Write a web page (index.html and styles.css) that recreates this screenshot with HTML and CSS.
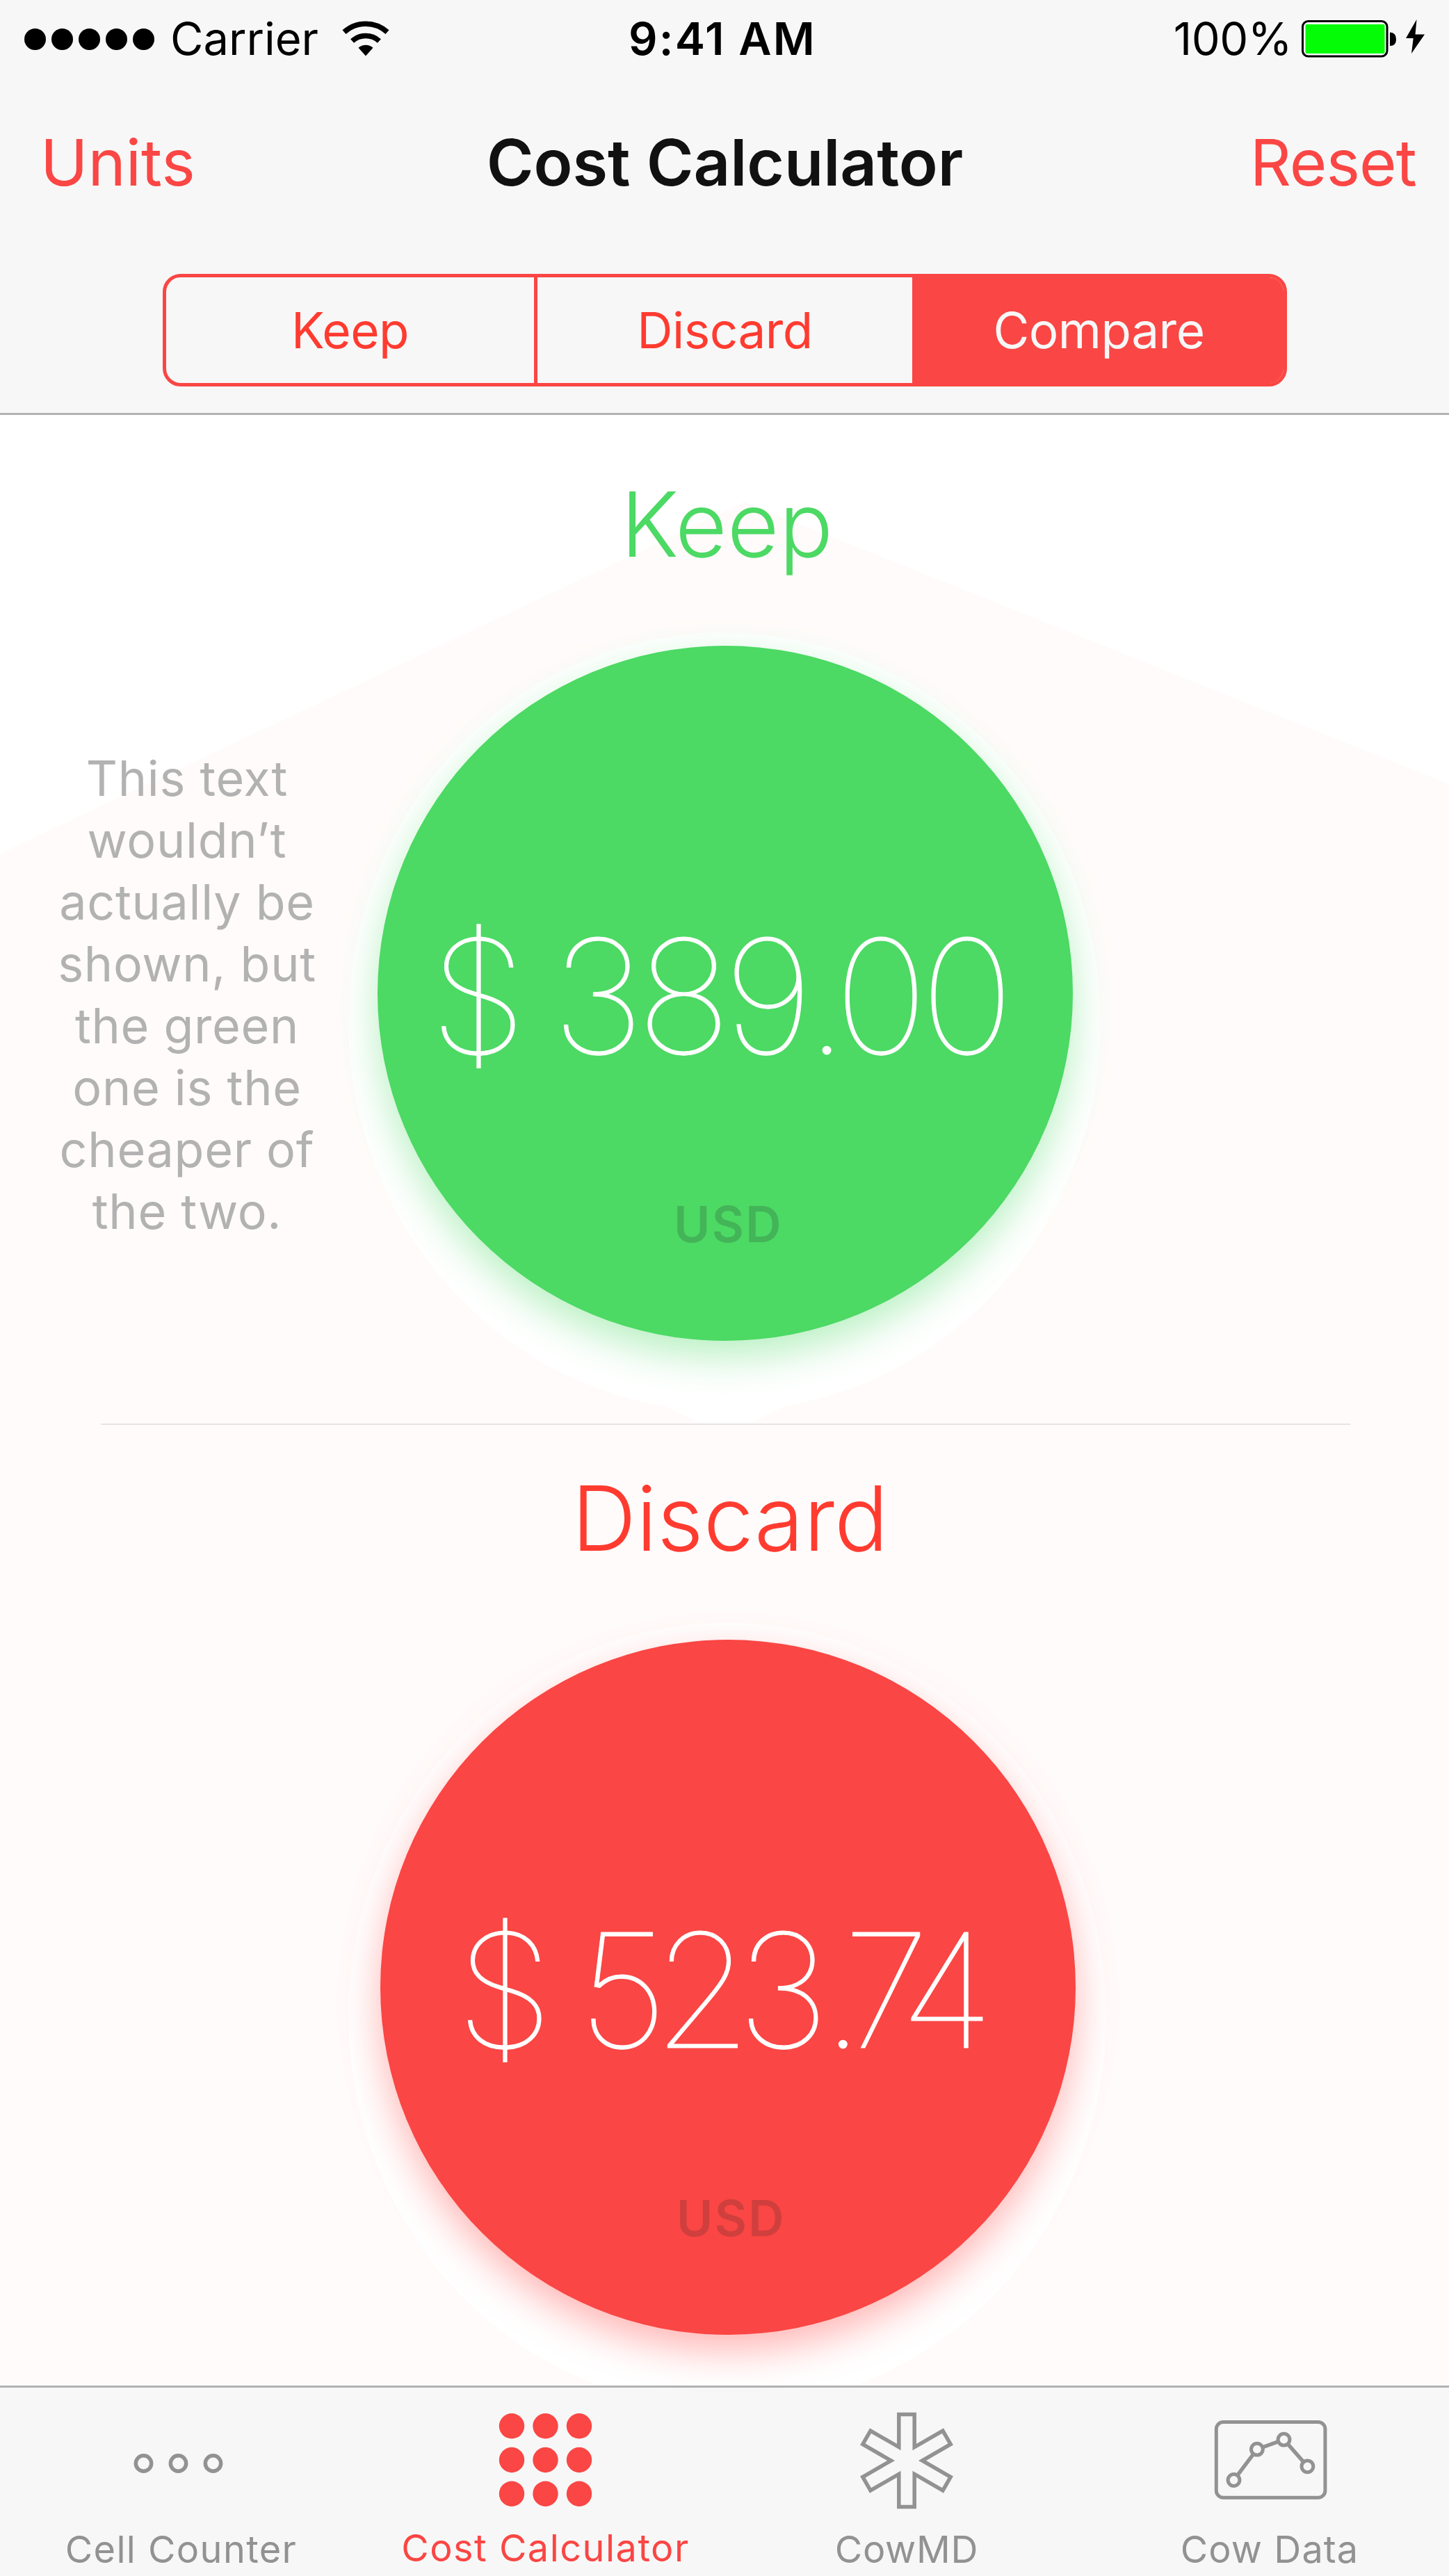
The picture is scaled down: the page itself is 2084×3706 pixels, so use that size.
FILE: index.html
```html
<!DOCTYPE html>
<html lang="en">
<head>
<meta charset="utf-8">
<title>Cost Calculator</title>
<link rel="stylesheet" href="styles.css">
</head>
<body>
<div class="app">
  <header class="header">
    <div class="status">
      <div class="status-left">
        <div class="signal"><i></i><i></i><i></i><i></i><i></i></div>
        <span class="carrier">Carrier</span>
        <svg class="wifi" width="70" height="52" viewBox="0 0 70 52">
          <g fill="none" stroke="#000" stroke-width="7.5">
            <path d="M4 16.1A46.3 46.3 0 0 1 66 16.1"/>
            <path d="M15.6 29A29 29 0 0 1 54.4 29"/>
          </g>
          <path d="M35 50.5L24.5 38.8A15.7 15.7 0 0 1 45.5 38.8Z"/>
        </svg>
      </div>
      <span class="clock">9:41 AM</span>
      <div class="status-right">
        <span class="percent">100%</span>
        <svg class="battery" width="136" height="54" viewBox="0 0 136 54">
          <rect x="1.5" y="1.5" width="121.5" height="50.5" rx="8" fill="#fff" stroke="#000" stroke-width="3"/>
          <rect x="5.5" y="6" width="114" height="42" rx="2" fill="#04fd06"/>
          <path d="M127 17.5Q136 18 136 27.5T127 37Z"/>
        </svg>
        <svg class="bolt" width="27" height="50" viewBox="0 0 27 50">
          <path d="M15.5 0L13.5 21.5H27L8 49L10.7 27H0Z"/>
        </svg>
      </div>
    </div>
    <nav class="nav">
      <a class="nav-link">Units</a>
      <h1 class="nav-title">Cost Calculator</h1>
      <a class="nav-link nav-end">Reset</a>
    </nav>
    <div class="segments">
      <button class="segment segment-first">Keep</button>
      <button class="segment">Discard</button>
      <button class="segment segment-on">Compare</button>
    </div>
  </header>

  <main class="content">
    <svg class="backdrop" width="2084" height="2835" viewBox="0 597 2084 2835">
      <path fill="#fffbfa" d="M0 1228L1071 722L2084 1128V3432H0Z"/>
      <ellipse cx="1042" cy="1470" rx="541" ry="560" fill="#fff"/>
      <path fill="#fff" d="M745 1922L1005 2046H1080L1340 1922Z"/>
      <ellipse cx="1046" cy="2900" rx="545" ry="565" fill="#fff"/>
    </svg>
    <section class="result">
      <h2 class="result-title keep-title">Keep</h2>
      <div class="result-row">
        <p class="note">This text<br>wouldn’t<br>actually be<br>shown, but<br>the green<br>one is the<br>cheaper of<br>the two.</p>
        <div class="disc disc-keep">
          <div class="amount amount-keep">$ 389<span class="dot">.</span>00</div>
          <div class="currency">USD</div>
        </div>
      </div>
    </section>
    <hr class="divider">
    <section class="result">
      <h2 class="result-title discard-title">Discard</h2>
      <div class="result-row">
        <div></div>
        <div class="disc disc-discard">
          <div class="amount amount-discard">$ <span class="tight">52</span>3<span class="dot">.</span><span class="seven">7</span>4</div>
          <div class="currency">USD</div>
        </div>
      </div>
    </section>
  </main>

  <footer class="tabs">
    <div class="tab tab-cell">
      <svg width="170" height="140" viewBox="0 0 170 140" fill="none" stroke="#929292" stroke-width="5.5">
        <circle cx="30.5" cy="74" r="11.2"/><circle cx="80.5" cy="74" r="11.2"/><circle cx="130.5" cy="74" r="11.2"/>
      </svg>
      <span>Cell Counter</span>
    </div>
    <div class="tab tab-cost">
      <svg width="170" height="140" viewBox="0 0 170 140" fill="#fa4644">
        <circle cx="36" cy="20.3" r="18.2"/><circle cx="84.5" cy="20.3" r="18.2"/><circle cx="133" cy="20.3" r="18.2"/>
        <circle cx="36" cy="69" r="18.2"/><circle cx="84.5" cy="69" r="18.2"/><circle cx="133" cy="69" r="18.2"/>
        <circle cx="36" cy="117.7" r="18.2"/><circle cx="84.5" cy="117.7" r="18.2"/><circle cx="133" cy="117.7" r="18.2"/>
      </svg>
      <span>Cost Calculator</span>
    </div>
    <div class="tab tab-md">
      <svg width="170" height="140" viewBox="-85 -70 170 140" fill="none" stroke="#929292" stroke-width="5.5">
        <path d="M-11.2 -66.5H11.2V-19.4L52 -42.95L63.2 -23.55L22.4 0L63.2 23.55L52 42.95L11.2 19.4V66.5H-11.2V19.4L-52 42.95L-63.2 23.55L-22.4 0L-63.2 -23.55L-52 -42.95L-11.2 -19.4Z"/>
      </svg>
      <span>CowMD</span>
    </div>
    <div class="tab tab-data">
      <svg width="170" height="140" viewBox="2 0 170 140" fill="#f7f7f7" stroke="#929292" stroke-width="5">
        <rect x="10.3" y="14.5" width="156.6" height="108.7" rx="10"/>
        <path fill="none" stroke-width="5.5" d="M35.5 98L68.9 53.7L107.5 39.7L141.4 78.3"/>
        <circle cx="35.5" cy="98" r="8.4"/><circle cx="68.9" cy="53.7" r="8.4"/><circle cx="107.5" cy="39.7" r="8.4"/><circle cx="141.4" cy="78.3" r="8.4"/>
      </svg>
      <span>Cow Data</span>
    </div>
  </footer>
</div>
</body>
</html>
```
FILE: styles.css
```css
* { box-sizing: border-box; }

body {
  margin: 0;
  background: #fff;
  font-family: Inter, "Liberation Sans", sans-serif;
}

.app {
  display: flex;
  flex-direction: column;
  width: 2084px;
  height: 3706px;
  overflow: hidden;
}

/* Header */
.header {
  flex: none;
  height: 597px;
  background: #f7f7f7;
  border-bottom: 3px solid #b2b2b2;
}

.status {
  display: grid;
  grid-template-columns: 1fr auto 1fr;
  height: 111px;
  padding: 0 35px;
  font-size: 65px;
  line-height: 111px;
  color: #000;
}

.status-left, .status-right { display: flex; align-items: center; }
.status-right { justify-content: flex-end; }

.signal { display: flex; gap: 8px; padding-top: 2px; }
.signal i { width: 31px; height: 31px; border-radius: 50%; background: #000; }
.carrier { margin-left: 23px; }
.wifi { margin-left: 33px; }
.clock { padding-right: 6px; font-weight: 600; letter-spacing: 2.2px; }
.percent { letter-spacing: -0.5px; }
.battery { margin-left: 14px; }
.bolt { margin: 0 0 6px 14px; }

.nav {
  display: grid;
  grid-template-columns: 1fr auto 1fr;
  height: 245px;
  padding: 0 47px 0 58px;
  font-size: 92px;
  line-height: 245px;
}

.nav-link { color: #fa4644; }
.nav-end { text-align: right; letter-spacing: -0.9px; }
.nav-title {
  margin: 0 10px 0 0;
  font-size: 92px;
  font-weight: 600;
  color: #111;
}

.segments {
  display: grid;
  grid-template-columns: 534px 539px 534px;
  width: 1617px;
  height: 162px;
  margin: 38px 0 0 234px;
  border: 5px solid #fa4644;
  border-radius: 26px;
  overflow: hidden;
}

.segment {
  padding: 0;
  border: 0;
  background: none;
  color: #ff3b30;
  font: 400 71px/152px Inter, "Liberation Sans", sans-serif;
  letter-spacing: -0.5px;
}

.segment-first { border-right: 5px solid #fa4644; }
.segment-on { padding-left: 3px; background: #fa4644; color: #f7f7f7; }

/* Results */
.content {
  position: relative;
  flex: none;
  height: 2835px;
}

.backdrop { position: absolute; inset: 0; z-index: -1; }

.result-title {
  margin: 0;
  font-size: 129px;
  font-weight: 300;
  line-height: 160px;
  text-align: center;
}

.keep-title { padding: 77px 0 0 7px; color: #4cd964; }
.discard-title { padding: 54px 0 0 16px; color: #ff3b30; }

.result-row {
  display: grid;
  grid-template-columns: 543px 1000px;
  height: 1000px;
  margin-top: 95px;
}

.note {
  margin: 146px 0 0;
  padding-right: 5px;
  font-size: 70px;
  line-height: 89px;
  letter-spacing: 0.7px;
  text-align: center;
  color: #b2b2b2;
}

.disc {
  display: flex;
  flex-direction: column;
  height: 1000px;
  border-radius: 50%;
  padding-top: 384px;
}

.disc-keep {
  background: #4cd964;
  box-shadow: 0 22px 56px rgba(76, 217, 100, 0.4);
}

.disc-discard {
  margin: 0 -4px 0 4px;
  background: #fa4644;
  box-shadow: 0 22px 56px rgba(255, 70, 67, 0.4);
}

.amount {
  color: #fff;
  font-size: 228px;
  font-weight: 100;
  line-height: 240px;
  letter-spacing: -11px;
  word-spacing: -6px;
  white-space: nowrap;
  -webkit-text-stroke: 1px #fff;
}

.amount-keep { padding-left: 75px; }
.amount-discard { padding-left: 109px; }
.amount-keep .dot { letter-spacing: -20px; }
.amount-discard .dot { letter-spacing: -31px; }
.amount .tight { letter-spacing: -21px; }
.amount .seven { letter-spacing: -43px; }

.currency {
  margin-top: 168px;
  padding-left: 9px;
  text-align: center;
  font-size: 71px;
  font-weight: 600;
  line-height: 80px;
  letter-spacing: 2.5px;
  color: rgba(34, 34, 34, 0.2);
}

.divider {
  width: 1797px;
  height: 2px;
  margin: 119px 0 0 145px;
  border: 0;
  background: #e4e4e6;
}

/* Tab bar */
.tabs {
  flex: 1;
  display: grid;
  grid-template-columns: repeat(4, 1fr);
  border-top: 3px solid #b2b2b2;
  background: #f7f7f7;
  color: #929292;
  font-size: 54px;
  line-height: 70px;
  letter-spacing: 1.4px;
}

.tab {
  display: flex;
  flex-direction: column;
  align-items: center;
  gap: 23px;
  padding-top: 35px;
}

.tab-cost { padding-left: 6px; gap: 21px; color: #fa4644; letter-spacing: 1.5px; }
.tab-md { padding-left: 3px; letter-spacing: 0.7px; }
.tab-data { padding-left: 5px; letter-spacing: 1.1px; }
```
